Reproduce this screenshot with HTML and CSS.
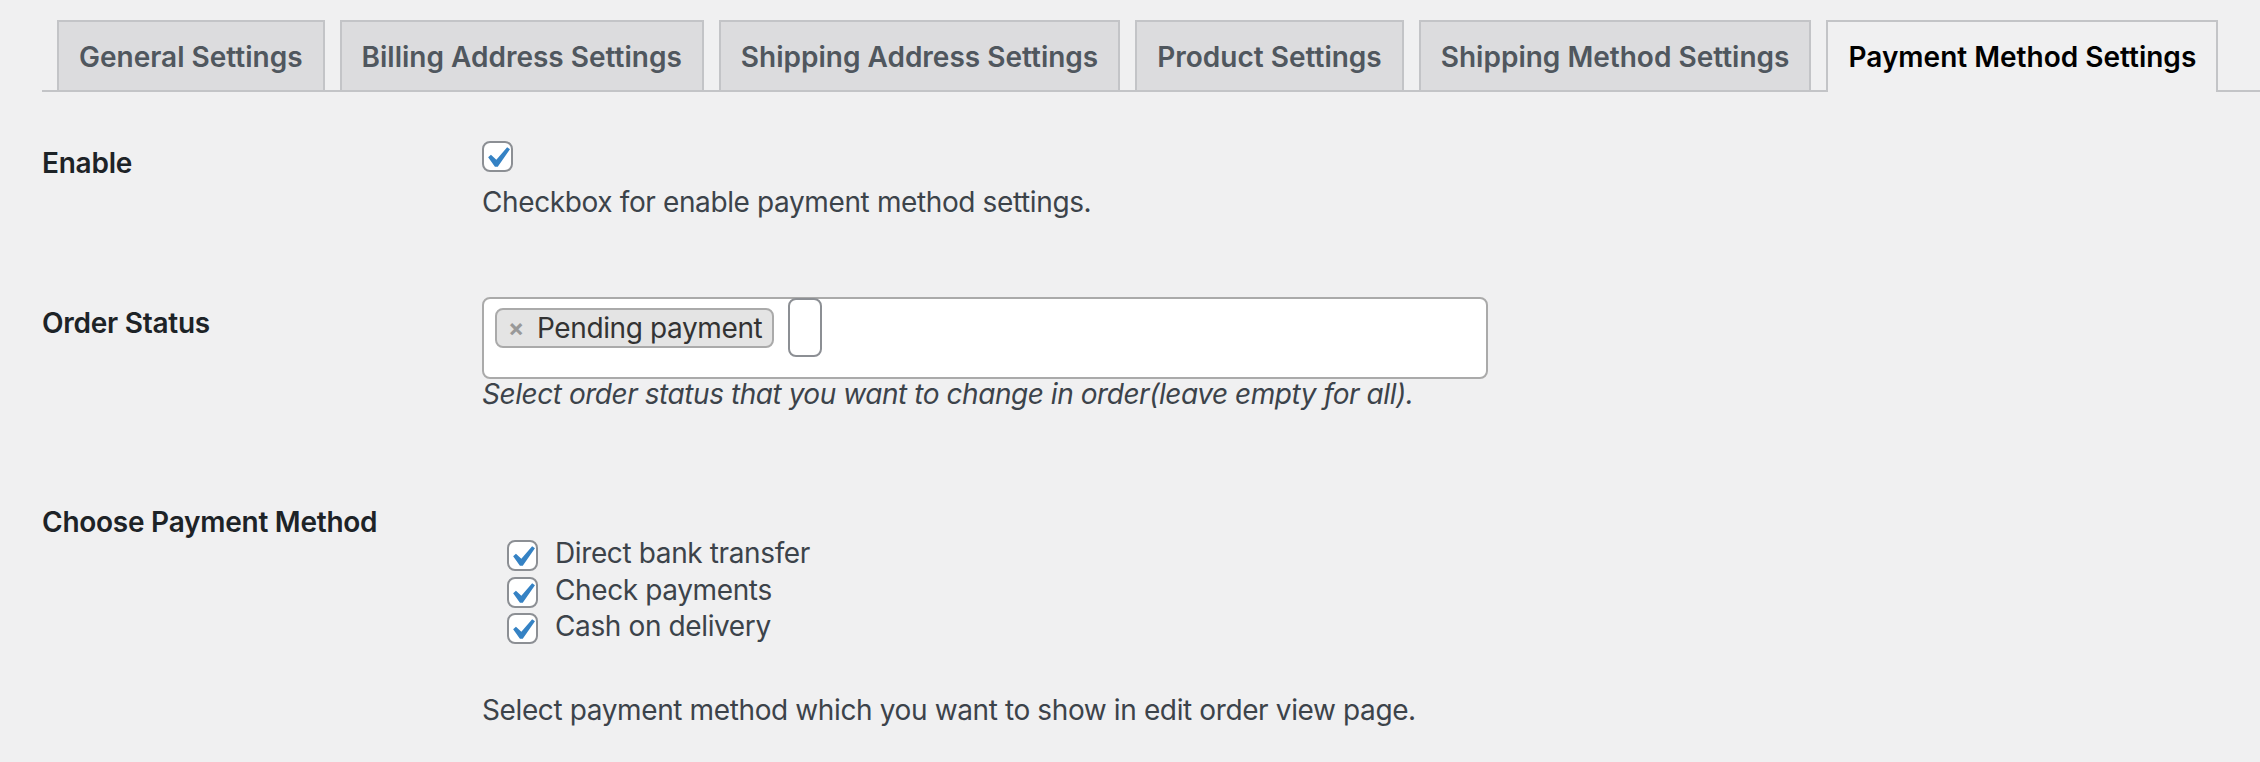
FILE: index.html
```html
<!DOCTYPE html>
<html lang="en">
<head>
<meta charset="utf-8">
<title>Payment Method Settings</title>
<link rel="stylesheet" href="styles.css">
</head>
<body>
<div class="wrap">
  <nav class="nav-tabs">
    <a class="tab">General Settings</a>
    <a class="tab">Billing Address Settings</a>
    <a class="tab">Shipping Address Settings</a>
    <a class="tab">Product Settings</a>
    <a class="tab">Shipping Method Settings</a>
    <a class="tab active">Payment Method Settings</a>
  </nav>
  <div class="form">
    <div class="row row-enable">
      <div class="th">Enable</div>
      <div class="td">
        <span class="cb"><svg class="check" viewBox="0 0 20 20" width="42" height="42"><path d="M14.83 4.89l1.34.94-5.81 8.38H9.02L5.78 9.67l1.34-1.25 2.57 2.4z"/></svg></span>
        <p class="desc">Checkbox for enable payment method settings.</p>
      </div>
    </div>
    <div class="row row-status">
      <div class="th">Order Status</div>
      <div class="td">
        <div class="select">
          <span class="chip"><span class="chip-x">×</span><span class="chip-text">Pending payment</span></span>
          <span class="search"></span>
        </div>
        <p class="desc italic">Select order status that you want to change in order(leave empty for all).</p>
      </div>
    </div>
    <div class="row row-method">
      <div class="th">Choose Payment Method</div>
      <div class="td">
        <ul class="methods">
          <li class="method"><span class="cb"><svg class="check" viewBox="0 0 20 20" width="42" height="42"><path d="M14.83 4.89l1.34.94-5.81 8.38H9.02L5.78 9.67l1.34-1.25 2.57 2.4z"/></svg></span><span class="method-label">Direct bank transfer</span></li>
          <li class="method"><span class="cb"><svg class="check" viewBox="0 0 20 20" width="42" height="42"><path d="M14.83 4.89l1.34.94-5.81 8.38H9.02L5.78 9.67l1.34-1.25 2.57 2.4z"/></svg></span><span class="method-label">Check payments</span></li>
          <li class="method"><span class="cb"><svg class="check" viewBox="0 0 20 20" width="42" height="42"><path d="M14.83 4.89l1.34.94-5.81 8.38H9.02L5.78 9.67l1.34-1.25 2.57 2.4z"/></svg></span><span class="method-label">Cash on delivery</span></li>
        </ul>
        <p class="desc desc-last">Select payment method which you want to show in edit order view page.</p>
      </div>
    </div>
  </div>
</div>
</body>
</html>
```
FILE: styles.css
```css
* { box-sizing: border-box; }
html, body { margin: 0; padding: 0; }
body {
  background: #f0f0f1;
  font-family: Inter, "Noto Sans", sans-serif;
  font-size: 28px;
  letter-spacing: -0.38px;
  color: #3c434a;
}
.wrap { padding: 20px 0 0 42px; }
.nav-tabs {
  display: flex;
  gap: 15px;
  padding-left: 15px;
  border-bottom: 2px solid #c3c4c7;
  height: 72px;
}
.tab {
  display: flex;
  align-items: center;
  height: 70px;
  padding: 2px 20px 0;
  border: 2px solid #c3c4c7;
  border-bottom: 0;
  background: #dcdcde;
  color: #50575e;
  font-weight: 600;
  letter-spacing: 0;
  white-space: nowrap;
}
.tab.active {
  background: #f0f0f1;
  color: #000;
  height: 72px;
  padding-bottom: 2px;
}
.row { display: flex; }
.th {
  width: 440px;
  flex: none;
  font-weight: 600;
  letter-spacing: -0.25px;
  color: #1d2327;
  line-height: 36px;
}
.td { flex: 1; }
.desc { margin: 0; line-height: 36px; }
.italic { font-style: italic; letter-spacing: -0.45px; line-height: 28px; margin-top: 1px; }
.cb {
  display: block;
  flex: none;
  width: 31px;
  height: 31px;
  border: 2px solid #8c8f94;
  border-radius: 8px;
  background: #fff;
  position: relative;
}
.check {
  position: absolute;
  left: -8px;
  top: -6px;
  fill: #3582c4;
}
.row-enable .th { padding-top: 53px; }
.row-enable .td { padding-top: 49px; padding-bottom: 40px; }
.row-enable .desc { margin-top: 12px; }
.row-status .th { padding-top: 45px; }
.row-status .td { padding-top: 37px; padding-bottom: 38px; }
.select {
  display: flex;
  align-items: flex-start;
  gap: 14px;
  width: 1006px;
  height: 82px;
  padding: 0 10px 0 11px;
  border: 2px solid #aaa;
  border-radius: 8px;
  background: #fff;
}
.chip {
  display: flex;
  align-items: center;
  height: 40px;
  margin-top: 9px;
  padding: 0 10px 0 11px;
  border: 2px solid #aaa;
  border-radius: 8px;
  background: #e4e4e4;
  color: #333;
}
.chip-x {
  color: #999;
  font-weight: 700;
  font-size: 24px;
  margin-right: 13px;
  line-height: 1;
}
.chip-text { line-height: 36px; }
.search {
  width: 34px;
  height: 59px;
  margin-top: -1px;
  border: 2px solid #8c8f94;
  border-radius: 8px;
  background: #fff;
}
.row-method .th { padding-top: 58px; }
.row-method .td { padding-top: 89px; }
.methods { list-style: none; margin: 0; padding: 0 0 0 25px; }
.method {
  display: flex;
  align-items: flex-start;
  height: 36.5px;
  line-height: 37px;
}
.method .cb { margin-top: 5px; margin-right: 17px; }
.desc-last { margin-top: 47px; }
```
